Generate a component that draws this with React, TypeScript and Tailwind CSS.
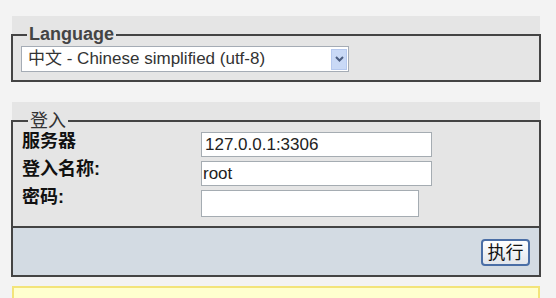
import React from "react";

const font = { fontFamily: '"Liberation Sans", Arial, "Noto Sans CJK SC", sans-serif' };

export default function App() {
  return (
    <div className="min-h-[298px] w-full overflow-hidden bg-[#f3f3f3] pt-[16px] pl-[11px]" style={font}>
      {/* Language fieldset */}
      <div className="w-[530px]">
        <div className="mx-px h-[18px] bg-[#e5e5e5]" />
        <div className="relative h-[48px] border-2 border-[#444] bg-[#e5e5e5] pt-[10px] pl-[8px]">
          <div className="absolute left-[14px] top-[-12px] bg-[#e5e5e5] px-[2px] text-[18px] font-bold leading-[20px] text-[#444]">
            Language
          </div>
          <div className="flex h-[26px] w-[328px] items-center border border-[#a5acb5] bg-white pl-[6px] pr-[1px]">
            <span className="flex-1 text-[17px] leading-[20px] text-[#333]">中文 - Chinese simplified (utf-8)</span>
            <span className="flex h-[21px] w-[16px] items-center justify-center border border-[#b5c8ee] bg-[#c9d9f6]">
              <svg width="9" height="6" viewBox="0 0 9 6">
                <path d="M1 1 L4.5 4.5 L8 1" fill="none" stroke="#4b5d80" strokeWidth="2" />
              </svg>
            </span>
          </div>
        </div>
      </div>

      {/* Login fieldset */}
      <div className="mt-[20px] w-[530px]">
        <div className="mx-px h-[18px] bg-[#e5e5e5]" />
        <div className="relative border-2 border-[#444] bg-[#e5e5e5]">
          <div className="absolute left-[15px] top-[-12px] bg-[#e5e5e5] px-[2px] text-[18px] leading-[22px] text-[#333]">
            登入
          </div>
          <div className="flex h-[104px] flex-col gap-[4px] pt-[10px] pl-[9px]">
            <div className="flex items-start">
              <div className="w-[179px] text-[18px] font-bold leading-[18px] text-[#111]">服务器</div>
              <div className="flex h-[25px] w-[231px] items-center border border-[#a5acb2] bg-white pl-[3px] text-[17px] text-[#222]">
                127.0.0.1:3306
              </div>
            </div>
            <div className="flex items-start">
              <div className="-mt-[1px] w-[179px] text-[18px] font-bold leading-[18px] text-[#111]">登入名称:</div>
              <div className="flex h-[25px] w-[231px] items-center border border-[#a5acb2] bg-white pl-[1px] text-[17px] text-[#222]">
                root
              </div>
            </div>
            <div className="flex items-start">
              <div className="-mt-[2px] w-[179px] text-[18px] font-bold leading-[18px] text-[#111]">密码:</div>
              <div className="h-[27px] w-[218px] border border-[#a5acb2] bg-white" />
            </div>
          </div>
          <div className="flex h-[49px] justify-end border-t-2 border-[#444] bg-[#d3dbe3] pt-[11px] pr-[9px]">
            <div className="flex h-[27px] w-[49px] items-center justify-center rounded-[4px] border-2 border-[#4a6ea6] bg-gradient-to-b from-white to-[#e2e6ec] text-[18px] leading-none text-[#111]">
              执行
            </div>
          </div>
        </div>
      </div>

      {/* Yellow notice */}
      <div className="mx-px mt-[9px] h-[40px] w-[528px] border-2 border-[#f3e47a] bg-[#ffffcf]" />
    </div>
  );
}
